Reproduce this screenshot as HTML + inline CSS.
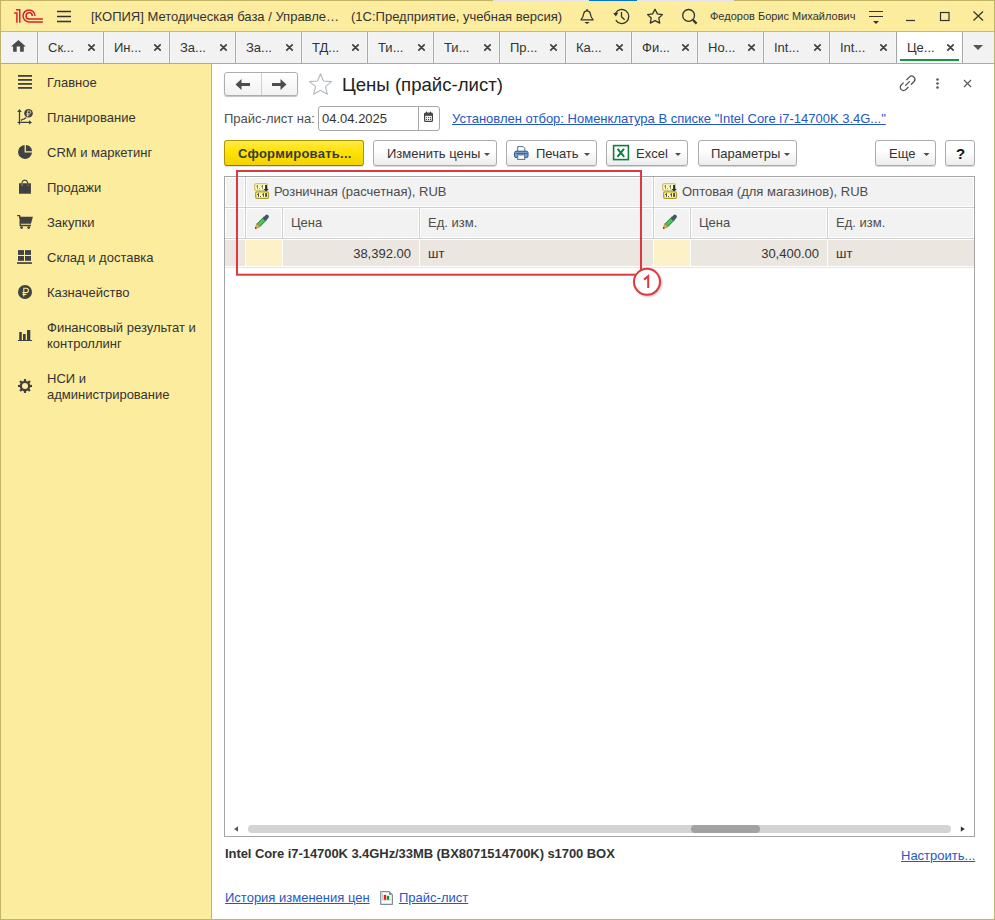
<!DOCTYPE html>
<html><head><meta charset="utf-8">
<style>
*{box-sizing:border-box;margin:0;padding:0}
html,body{width:995px;height:920px;overflow:hidden;background:#fff}
body{position:relative;font-family:"Liberation Sans",sans-serif;font-size:13px;color:#333}
.a{position:absolute}
.t{position:absolute;white-space:nowrap;line-height:15px;font-size:13px}
#top{left:0;top:0;width:995px;height:32px;background:#FBEC9E}
#tabs{left:1px;top:32px;width:993px;height:31px;background:#F2F2F2}
#side{left:1px;top:64px;width:210px;height:855px;background:#FBEC9E}
.sep{position:absolute;top:32px;width:1px;height:31px;background:#A8A8A8;box-shadow:-1px 0 0 #F7F7F7,1px 0 0 #F7F7F7}
.tabt{position:absolute;top:40px;line-height:15px;color:#333;white-space:nowrap}
.btn{position:absolute;top:140px;height:26px;border:1px solid #ABABAB;border-radius:3px;background:linear-gradient(#fff 40%,#ECECEC);box-shadow:0 1px 0 rgba(0,0,0,.16)}
.lnk{color:#2457C5;text-decoration:underline}
.side{position:absolute;left:47px;line-height:15px;color:#333;white-space:nowrap}
svg{position:absolute;left:0;top:0}
.hc{background:#F2F2F2;box-shadow:inset 0 0 0 1px #fff}
</style></head><body>
<div class="a" id="top"></div>
<div class="a" style="left:0;top:0;width:995px;height:1px;background:#C2B467"></div>
<div class="a" style="left:493px;top:0;width:241px;height:1px;background:#E4E4EA"></div>
<div class="a" style="left:589px;top:0;width:48px;height:1px;background:#0078D7"></div>
<div class="a" style="left:0;top:0;width:1px;height:920px;background:#C2B467"></div>
<div class="a" style="left:994px;top:0;width:1px;height:920px;background:#C2B467"></div>
<div class="a" style="left:0;top:919px;width:995px;height:1px;background:#C2B467"></div>
<div class="a" style="left:1px;top:31px;width:993px;height:1px;background:#C8BA70"></div>
<div class="a" id="tabs"></div>
<div class="a" style="left:897px;top:32px;width:65px;height:31px;background:#fff"></div>
<div class="a" style="left:900px;top:59px;width:59px;height:2px;background:#119A3E"></div>
<div class="a" style="left:1px;top:63px;width:993px;height:1px;background:#A9A9A9"></div>
<div class="a" id="side"></div>
<div class="a" style="left:211px;top:64px;width:1px;height:855px;background:#C4B467"></div>

<div class="sep" style="left:37px"></div>
<div class="tabt" style="left:48px">Ск...</div>
<div class="sep" style="left:103px"></div>
<div class="tabt" style="left:114px">Ин...</div>
<div class="sep" style="left:169px"></div>
<div class="tabt" style="left:180px">За...</div>
<div class="sep" style="left:235px"></div>
<div class="tabt" style="left:246px">За...</div>
<div class="sep" style="left:301px"></div>
<div class="tabt" style="left:312px">ТД...</div>
<div class="sep" style="left:367px"></div>
<div class="tabt" style="left:378px">Ти...</div>
<div class="sep" style="left:433px"></div>
<div class="tabt" style="left:444px">Ти...</div>
<div class="sep" style="left:499px"></div>
<div class="tabt" style="left:510px">Пр...</div>
<div class="sep" style="left:565px"></div>
<div class="tabt" style="left:576px">Ка...</div>
<div class="sep" style="left:631px"></div>
<div class="tabt" style="left:642px">Фи...</div>
<div class="sep" style="left:697px"></div>
<div class="tabt" style="left:708px">Но...</div>
<div class="sep" style="left:763px"></div>
<div class="tabt" style="left:774px">Int...</div>
<div class="sep" style="left:829px"></div>
<div class="tabt" style="left:840px">Int...</div>
<div class="sep" style="left:896px"></div>
<div class="tabt" style="left:907px">Це...</div>
<div class="sep" style="left:962px"></div>

<div class="t" style="left:91px;top:9px">[КОПИЯ] Методическая база / Управле…</div>
<div class="t" style="left:351px;top:9px">(1С:Предприятие, учебная версия)</div>
<div class="t" style="left:710px;top:9px;font-size:11px">Федоров Борис Михайлович</div>

<div class="side" style="top:75px">Главное</div>
<div class="side" style="top:110px">Планирование</div>
<div class="side" style="top:145px">CRM и маркетинг</div>
<div class="side" style="top:180px">Продажи</div>
<div class="side" style="top:215px">Закупки</div>
<div class="side" style="top:250px">Склад и доставка</div>
<div class="side" style="top:285px">Казначейство</div>
<div class="side" style="top:320px;line-height:16px">Финансовый результат и<br>контроллинг</div>
<div class="side" style="top:371px;line-height:16px">НСИ и<br>администрирование</div>


<!-- ====== content ====== -->
<!-- nav buttons -->
<div class="a" style="left:224px;top:72px;width:74px;height:24px;border:1px solid #ADADAD;border-radius:3px;background:linear-gradient(#fff,#F2F2F2);box-shadow:0 1px 1px rgba(0,0,0,.25)"></div>
<div class="a" style="left:261px;top:73px;width:1px;height:22px;background:#D0D0D0"></div>
<div class="t" style="left:342px;top:75px;font-size:18.6px;line-height:20px;color:#222">Цены (прайс-лист)</div>

<!-- date row -->
<div class="t" style="left:224px;top:111px;color:#4D4D4D">Прайс-лист на:</div>
<div class="a" style="left:318px;top:106px;width:122px;height:25px;border:1px solid #A8A8A8;border-radius:3px;background:#fff"></div>
<div class="a" style="left:418px;top:107px;width:1px;height:23px;background:#A8A8A8"></div>
<div class="t" style="left:322px;top:111px;color:#333">04.04.2025</div>
<div class="t lnk" style="left:452px;top:111px">Установлен отбор: Номенклатура В списке "Intel Core i7-14700K 3.4G..."</div>

<!-- buttons -->
<div class="btn" style="left:224px;width:140px;border-color:#AD9600 #AD9600 #8E7B00;background:linear-gradient(#FFE94C,#FFE300 45%,#F2D300);box-shadow:0 1px 0 rgba(0,0,0,.12)"></div>
<div class="t" style="left:238px;top:146px;font-weight:bold;color:#3A3A3A;letter-spacing:0.25px">Сформировать...</div>
<div class="btn" style="left:373px;width:124px"></div>
<div class="t" style="left:387px;top:146px;color:#333">Изменить цены</div>
<div class="btn" style="left:506px;width:91px"></div>
<div class="t" style="left:536px;top:146px;color:#333">Печать</div>
<div class="btn" style="left:606px;width:82px"></div>
<div class="t" style="left:636px;top:146px;color:#333">Excel</div>
<div class="btn" style="left:698px;width:99px"></div>
<div class="t" style="left:711px;top:146px;color:#333">Параметры</div>
<div class="btn" style="left:875px;width:61px"></div>
<div class="t" style="left:889px;top:146px;color:#333">Еще</div>
<div class="btn" style="left:945px;width:30px"></div>
<div class="t" style="left:956px;top:145px;color:#111;font-size:15px;line-height:17px;font-weight:bold">?</div>

<!-- table -->
<div class="a" style="left:224px;top:176px;width:751px;height:661px;border:1px solid #A5A5A5;background:#fff"></div>
<!-- header rows -->
<div class="a" style="left:225px;top:177px;width:749px;height:62px;background:#CFCFCF"></div>
<div class="a hc" style="left:225px;top:177px;width:20px;height:30px"></div>
<div class="a hc" style="left:225px;top:208px;width:20px;height:30px"></div>
<div class="a hc" style="left:246px;top:177px;width:407px;height:30px"></div>
<div class="a hc" style="left:654px;top:177px;width:320px;height:30px"></div>
<div class="a hc" style="left:246px;top:208px;width:36px;height:30px"></div>
<div class="a hc" style="left:283px;top:208px;width:136px;height:30px"></div>
<div class="a hc" style="left:420px;top:208px;width:233px;height:30px"></div>
<div class="a hc" style="left:654px;top:208px;width:36px;height:30px"></div>
<div class="a hc" style="left:691px;top:208px;width:136px;height:30px"></div>
<div class="a hc" style="left:828px;top:208px;width:146px;height:30px"></div>
<!-- data row -->
<div class="a" style="left:225px;top:267px;width:749px;height:1px;background:#E6E6E6"></div>
<div class="a" style="left:225px;top:240px;width:20px;height:26px;background:#EBE7E0"></div>
<div class="a" style="left:246px;top:240px;width:36px;height:26px;background:#FDF1C8"></div>
<div class="a" style="left:283px;top:240px;width:136px;height:26px;background:#EBE7E0"></div>
<div class="a" style="left:420px;top:240px;width:233px;height:26px;background:#EBE7E0"></div>
<div class="a" style="left:654px;top:240px;width:36px;height:26px;background:#FDF1C8"></div>
<div class="a" style="left:691px;top:240px;width:136px;height:26px;background:#EBE7E0"></div>
<div class="a" style="left:828px;top:240px;width:146px;height:26px;background:#EBE7E0"></div>

<div class="t" style="left:274px;top:184px;color:#4D4D4D">Розничная (расчетная), RUB</div>
<div class="t" style="left:682px;top:184px;color:#4D4D4D">Оптовая (для магазинов), RUB</div>
<div class="t" style="left:291px;top:215px;color:#4D4D4D">Цена</div>
<div class="t" style="left:428px;top:215px;color:#4D4D4D">Ед. изм.</div>
<div class="t" style="left:699px;top:215px;color:#4D4D4D">Цена</div>
<div class="t" style="left:836px;top:215px;color:#4D4D4D">Ед. изм.</div>
<div class="t" style="left:283px;width:128px;text-align:right;top:246px;color:#333">38,392.00</div>
<div class="t" style="left:428px;top:246px;color:#333">шт</div>
<div class="t" style="left:691px;width:128px;text-align:right;top:246px;color:#333">30,400.00</div>
<div class="t" style="left:836px;top:246px;color:#333">шт</div>

<!-- scrollbar -->
<div class="a" style="left:248px;top:825px;width:703px;height:8px;border-radius:4px;background:#D4D4D4"></div>
<div class="a" style="left:691px;top:825px;width:69px;height:8px;border-radius:4px;background:#A2A2A2"></div>

<!-- footer -->
<div class="t" style="left:225px;top:846px;font-weight:bold;color:#333;letter-spacing:-0.07px">Intel Core i7-14700K 3.4GHz/33MB (BX8071514700K) s1700 BOX</div>
<div class="t lnk" style="left:901px;top:848px">Настроить...</div>
<div class="t lnk" style="left:225px;top:890px">История изменения цен</div>
<div class="t lnk" style="left:399px;top:890px">Прайс-лист</div>

<svg width="995" height="920" viewBox="0 0 995 920">
<!-- 1C logo -->
<g fill="none" stroke="#D9202A" stroke-width="1.5">
<path d="M14.2 12.9H16.9V22.7M16.1 9.85H19.75V22.7"/>
<path d="M35 15.9A6 6 0 1 0 28.9 21.9H42.9"/>
<path d="M32.3 15.9A3.1 3.1 0 1 0 29.2 19H42.9"/>
</g>
<!-- hamburger -->
<g stroke="#333" stroke-width="1.4"><path d="M57 11.5H71M57 16.5H71M57 21.5H71"/></g>
<!-- bell -->
<g fill="none" stroke="#333" stroke-width="1.3">
<path d="M580.6 19.8H593.6M581 19.6C583 17.5 583.6 15 583.9 13C584.3 11.5 585.3 10.8 587 10.8C588.7 10.8 589.7 11.5 590.1 13C590.4 15 591 17.5 593 19.6"/>
</g>
<circle cx="587" cy="9.9" r="0.9" fill="#333"/>
<path d="M584.3 22H589.7L587 24Z" fill="#333"/>
<!-- history -->
<g fill="none" stroke="#333" stroke-width="1.3">
<path d="M615.6 13.2A7 7 0 1 1 615.8 20.2"/>
<path d="M621.5 12V16.8L624.6 19.8"/>
</g>
<path d="M613.2 13.3L618.4 12.6L615.9 16.5Z" fill="#333"/>
<!-- star -->
<path d="M655 9.3L657.4 13.9L662.4 14.6L658.8 18L659.7 23.1L655 20.7L650.3 23.1L651.2 18L647.6 14.6L652.6 13.9Z" fill="none" stroke="#333" stroke-width="1.3" stroke-linejoin="round"/>
<!-- search -->
<circle cx="688.6" cy="15.4" r="5.9" fill="none" stroke="#333" stroke-width="1.3"/>
<path d="M692.8 19.8L696.6 23.6" stroke="#333" stroke-width="2.2"/>
<!-- right menu -->
<g stroke="#333" stroke-width="1.2"><path d="M869 11.5H883M869 16.5H883"/></g>
<path d="M873 21H879L876 24Z" fill="#333"/>
<path d="M906 20.5H915" stroke="#333" stroke-width="1.2"/>
<rect x="940.5" y="12.5" width="8.5" height="8" fill="none" stroke="#333" stroke-width="1.2"/>
<path d="M973.5 11.5L983 20.5M983 11.5L973.5 20.5" stroke="#333" stroke-width="1.2"/>
<!-- home -->
<path d="M11 46.4L18.4 39.9L25.8 46.4H23.8V51.8H20.1V46.6H16.7V51.8H13.1V46.4Z" fill="#4A4A4A"/>
<!-- tab x -->
<g stroke="#404040" stroke-width="1.7" stroke-linecap="round">
<path d="M88.8 44.8L94.2 50.2M94.2 44.8L88.8 50.2"/>
<path d="M154.8 44.8L160.2 50.2M160.2 44.8L154.8 50.2"/>
<path d="M220.8 44.8L226.2 50.2M226.2 44.8L220.8 50.2"/>
<path d="M286.8 44.8L292.2 50.2M292.2 44.8L286.8 50.2"/>
<path d="M352.8 44.8L358.2 50.2M358.2 44.8L352.8 50.2"/>
<path d="M418.8 44.8L424.2 50.2M424.2 44.8L418.8 50.2"/>
<path d="M484.8 44.8L490.2 50.2M490.2 44.8L484.8 50.2"/>
<path d="M550.8 44.8L556.2 50.2M556.2 44.8L550.8 50.2"/>
<path d="M616.8 44.8L622.2 50.2M622.2 44.8L616.8 50.2"/>
<path d="M682.8 44.8L688.2 50.2M688.2 44.8L682.8 50.2"/>
<path d="M748.8 44.8L754.2 50.2M754.2 44.8L748.8 50.2"/>
<path d="M814.8 44.8L820.2 50.2M820.2 44.8L814.8 50.2"/>
<path d="M880.8 44.8L886.2 50.2M886.2 44.8L880.8 50.2"/>
<path d="M947.8 44.8L953.2 50.2M953.2 44.8L947.8 50.2"/>
</g>
<path d="M973 45H983L978 50Z" fill="#555"/>

<!-- nav arrows -->
<path d="M235.5 84.5L241.5 79V83H250V86H241.5V90Z" fill="#4D4D4D"/>
<path d="M286.5 84.5L280.5 79V83H272V86H280.5V90Z" fill="#4D4D4D"/>
<path d="M320.5 73.8L323.5 81L331.5 81.6L325.4 86.7L327.4 94.3L320.5 90.2L313.6 94.3L315.6 86.7L309.5 81.6L317.5 81Z" fill="none" stroke="#B4BAC2" stroke-width="1.1" stroke-linejoin="round"/>
<!-- link / dots / close -->
<g fill="none" stroke="#505050" stroke-width="1.25" stroke-linecap="round">
<path d="M906.7 79.7L909.3 77.1A3.25 3.25 0 0 1 913.9 81.7L911.3 84.3"/>
<path d="M903.3 82.9L901.2 85A3.25 3.25 0 0 0 905.8 89.6L908.1 87.3"/>
<path d="M905.6 85.4L909.4 81.6"/>
</g>
<g fill="#5A5A5A"><circle cx="937.5" cy="79.5" r="1.3"/><circle cx="937.5" cy="83.5" r="1.3"/><circle cx="937.5" cy="87.5" r="1.3"/></g>
<path d="M964 80L971 87M971 80L964 87" stroke="#5A5A5A" stroke-width="1.2"/>
<!-- calendar -->
<rect x="424.6" y="113.2" width="7.8" height="8.2" rx="1" fill="none" stroke="#444" stroke-width="1.2"/>
<rect x="424.6" y="113.2" width="7.8" height="2.6" fill="#444"/>
<path d="M426.5 111.6V113.5M430.5 111.6V113.5" stroke="#444" stroke-width="1"/>
<g fill="#444"><circle cx="426.5" cy="117.3" r=".6"/><circle cx="428.5" cy="117.3" r=".6"/><circle cx="430.5" cy="117.3" r=".6"/><circle cx="426.5" cy="119.4" r=".6"/><circle cx="428.5" cy="119.4" r=".6"/><circle cx="430.5" cy="119.4" r=".6"/></g>
<!-- dropdown arrows -->
<g fill="#4D4D4D">
<path d="M484 153H490L487 156Z"/>
<path d="M584 153H590L587 156Z"/>
<path d="M675 153H681L678 156Z"/>
<path d="M784 153H790L787 156Z"/>
<path d="M923.5 153H929.5L926.5 156Z"/>
</g>
<!-- printer -->
<path d="M517.7 151.2V146.6H523.2L524.8 148.4V151.2" fill="#fff" stroke="#4C6F95" stroke-width="1"/>
<rect x="514.6" y="151.2" width="13.4" height="6.4" rx="1.6" fill="#7DA4CE" stroke="#234F80" stroke-width="1"/>
<path d="M516 153.4H527" stroke="#234F80" stroke-width=".8"/>
<rect x="517.7" y="154.9" width="7" height="4.5" fill="#fff" stroke="#4C6F95" stroke-width="1"/>
<!-- excel -->
<rect x="613.6" y="145.6" width="14.8" height="14" fill="#fff" stroke="#107C41" stroke-width="1.6"/>
<path d="M617.6 148.8L624.2 156.8M624 148.8L617.4 156.8" stroke="#107C41" stroke-width="2"/>
<!-- number icons -->
<g>
<rect x="254.7" y="183.7" width="12.6" height="6.6" rx="1.3" fill="#FFFFC4" stroke="#C9B55A" stroke-width="1.1"/>
<rect x="255.7" y="191.8" width="12.7" height="6.5" rx="1.3" fill="#FFFF9E" stroke="#B39C26" stroke-width="1.3"/>
<g fill="#707078"><rect x="257" y="185" width=".9" height="3.7"/><rect x="256.2" y="185.8" width=".9" height=".8"/><rect x="259" y="188" width=".9" height=".8"/><rect x="262" y="185" width=".9" height="3.7"/><rect x="261.2" y="185.8" width=".9" height=".8"/></g>
<g fill="#4A4A58"><rect x="258" y="193.1" width="1" height="3.7"/><rect x="257.1" y="193.9" width=".9" height=".9"/><rect x="260" y="196" width="1" height=".9"/><rect x="262.9" y="193.1" width="1" height="3.7"/><rect x="262" y="193.9" width=".9" height=".9"/><rect x="265.1" y="193.1" width="1.9" height="3.7"/></g>
<rect x="265.1" y="185" width="1.9" height="4.2" fill="#1F2D3C"/>
<path d="M263.5 189H268.9L266.1 191.6Z" fill="#1F2D3C"/>
</g>
<g transform="translate(408,0)">
<rect x="254.7" y="183.7" width="12.6" height="6.6" rx="1.3" fill="#FFFFC4" stroke="#C9B55A" stroke-width="1.1"/>
<rect x="255.7" y="191.8" width="12.7" height="6.5" rx="1.3" fill="#FFFF9E" stroke="#B39C26" stroke-width="1.3"/>
<g fill="#707078"><rect x="257" y="185" width=".9" height="3.7"/><rect x="256.2" y="185.8" width=".9" height=".8"/><rect x="259" y="188" width=".9" height=".8"/><rect x="262" y="185" width=".9" height="3.7"/><rect x="261.2" y="185.8" width=".9" height=".8"/></g>
<g fill="#4A4A58"><rect x="258" y="193.1" width="1" height="3.7"/><rect x="257.1" y="193.9" width=".9" height=".9"/><rect x="260" y="196" width="1" height=".9"/><rect x="262.9" y="193.1" width="1" height="3.7"/><rect x="262" y="193.9" width=".9" height=".9"/><rect x="265.1" y="193.1" width="1.9" height="3.7"/></g>
<rect x="265.1" y="185" width="1.9" height="4.2" fill="#1F2D3C"/>
<path d="M263.5 189H268.9L266.1 191.6Z" fill="#1F2D3C"/>
</g>
<!-- pencils -->
<g>
<path d="M258.3 225.3L265.5 218.1" stroke="#2F7F3A" stroke-width="4.6"/>
<path d="M258.5 225.1L265.3 218.3" stroke="#4CC55C" stroke-width="3"/>
<path d="M265.2 218.4L266.9 216.7" stroke="#4A5366" stroke-width="4" stroke-linecap="round"/>
<path d="M256.7 223.7L259.9 226.9L255.2 228.6Z" fill="#F5B445" stroke="#9A6A20" stroke-width=".6" stroke-linejoin="round"/>
<path d="M255 228.8L256.8 228.2L255.6 227Z" fill="#2A1E0A"/>
</g>
<g transform="translate(408,0)">
<path d="M258.3 225.3L265.5 218.1" stroke="#2F7F3A" stroke-width="4.6"/>
<path d="M258.5 225.1L265.3 218.3" stroke="#4CC55C" stroke-width="3"/>
<path d="M265.2 218.4L266.9 216.7" stroke="#4A5366" stroke-width="4" stroke-linecap="round"/>
<path d="M256.7 223.7L259.9 226.9L255.2 228.6Z" fill="#F5B445" stroke="#9A6A20" stroke-width=".6" stroke-linejoin="round"/>
<path d="M255 228.8L256.8 228.2L255.6 227Z" fill="#2A1E0A"/>
</g>
<!-- scroll arrows -->
<path d="M238 826.2V831.8L234.2 829Z" fill="#555"/>
<path d="M960.8 826.5V831.7L964.8 829.1Z" fill="#333"/>
<!-- annotation -->
<rect x="237" y="171" width="404" height="103.7" fill="none" stroke="#DD3A40" stroke-width="2"/>
<circle cx="647" cy="281.8" r="13" fill="#fff" stroke="#DD3A40" stroke-width="2" style="filter:drop-shadow(1px 1px 1px rgba(0,0,0,.25))"/>
<path d="M644 279.6L648.2 276.2V288" fill="none" stroke="#DD3A40" stroke-width="2"/>
<!-- report icon -->
<path d="M380.7 891.6H389.2L392.4 894.8V904.3H380.7Z" fill="#fff" stroke="#7F8D9A" stroke-width="1.2" stroke-linejoin="round"/>
<path d="M389 891.8V895H392.2Z" fill="#7F8D9A"/>
<path d="M382.6 893.3V899.9H391" fill="none" stroke="#9AB8C8" stroke-width=".7"/>
<rect x="383.8" y="894.8" width="2.4" height="5" fill="#F41A1A"/>
<rect x="386.9" y="895.8" width="2.3" height="4" fill="#0A9A0A"/>
<!-- sidebar icons -->
<g fill="#414141">
<rect x="18" y="75" width="14" height="1.8"/><rect x="18" y="79" width="14" height="1.8"/><rect x="18" y="83" width="14" height="1.8"/><rect x="18" y="87" width="14" height="1.8"/>
</g>
<g fill="none" stroke="#414141" stroke-width="1.3">
<path d="M19.5 110.5V124.6M17.6 122.4H30"/>
<path d="M21 120.6L22.5 119.3L23.8 119.2L25.2 118.2L26.2 118.1"/>
</g>
<g fill="#414141">
<path d="M17.2 112L19.5 109L21.8 112Z"/><path d="M29 120.3L32 122.4L29 124.6Z"/>
<circle cx="28.5" cy="113.3" r="4.3"/>
</g>
<path d="M27.6 116.6V110.8H29.3A1.5 1.5 0 0 1 29.3 113.8H26.4M26.4 115.1H29.4" fill="none" stroke="#FBEC9E" stroke-width=".8"/>
<!-- pie -->
<path d="M24.6 145V152.6H32A7 7 0 1 1 24.6 145Z" fill="#414141"/>
<path d="M25.9 145A6.2 6.2 0 0 1 32 151.2H25.9Z" fill="#414141"/>
<!-- bag -->
<path d="M19 183.2H21.4V185.4H22.6V183.2H27V185.4H28.2V183.2H30.9V193.8H19Z" fill="#414141"/>
<path d="M22 185.2V182.3A2.9 2.9 0 0 1 27.6 182.3V185.2" fill="none" stroke="#414141" stroke-width="1.2"/>
<!-- cart -->
<path d="M17.1 215.7H19.6L20.2 218" fill="none" stroke="#414141" stroke-width="1.3"/>
<path d="M19 216.8H32.9L31 223.8H20.2Z" fill="#414141"/>
<path d="M20.2 221V225.5H31" fill="none" stroke="#414141" stroke-width="1.3"/>
<circle cx="21.6" cy="227.6" r="1.4" fill="#414141"/><circle cx="28.7" cy="227.6" r="1.4" fill="#414141"/>
<!-- warehouse -->
<g fill="#414141">
<rect x="18" y="250.1" width="6" height="4.8"/><rect x="25" y="250.1" width="6" height="4.8"/>
<rect x="18" y="256" width="6" height="4.8"/><rect x="25" y="256" width="6" height="4.8"/>
<rect x="17.1" y="262.2" width="14.8" height="1.7"/>
</g>
<!-- ruble coin -->
<circle cx="25" cy="292" r="7" fill="#414141"/>
<path d="M23.8 296.6V288.3H26.3A2.1 2.1 0 0 1 26.3 292.5H22.4M22.4 294.4H26.4" fill="none" stroke="#FBEC9E" stroke-width="1.1"/>
<!-- bars -->
<g fill="#414141">
<rect x="19.2" y="332" width="2.6" height="8.5"/><rect x="23" y="334" width="2.7" height="6.5"/><rect x="27" y="330" width="3.3" height="10.5"/>
<rect x="17.9" y="340" width="14.2" height="1"/>
</g>
<!-- gear -->
<g transform="translate(25,386)" fill="#414141">
<circle r="4.15" fill="none" stroke="#414141" stroke-width="2.3"/>
<rect x="-1.1" y="-7" width="2.2" height="14"/><rect x="-1.1" y="-7" width="2.2" height="14" transform="rotate(45)"/><rect x="-1.1" y="-7" width="2.2" height="14" transform="rotate(90)"/><rect x="-1.1" y="-7" width="2.2" height="14" transform="rotate(135)"/>
<circle r="3" fill="#FBEC9E"/>
</g>
</svg>
</body></html>
